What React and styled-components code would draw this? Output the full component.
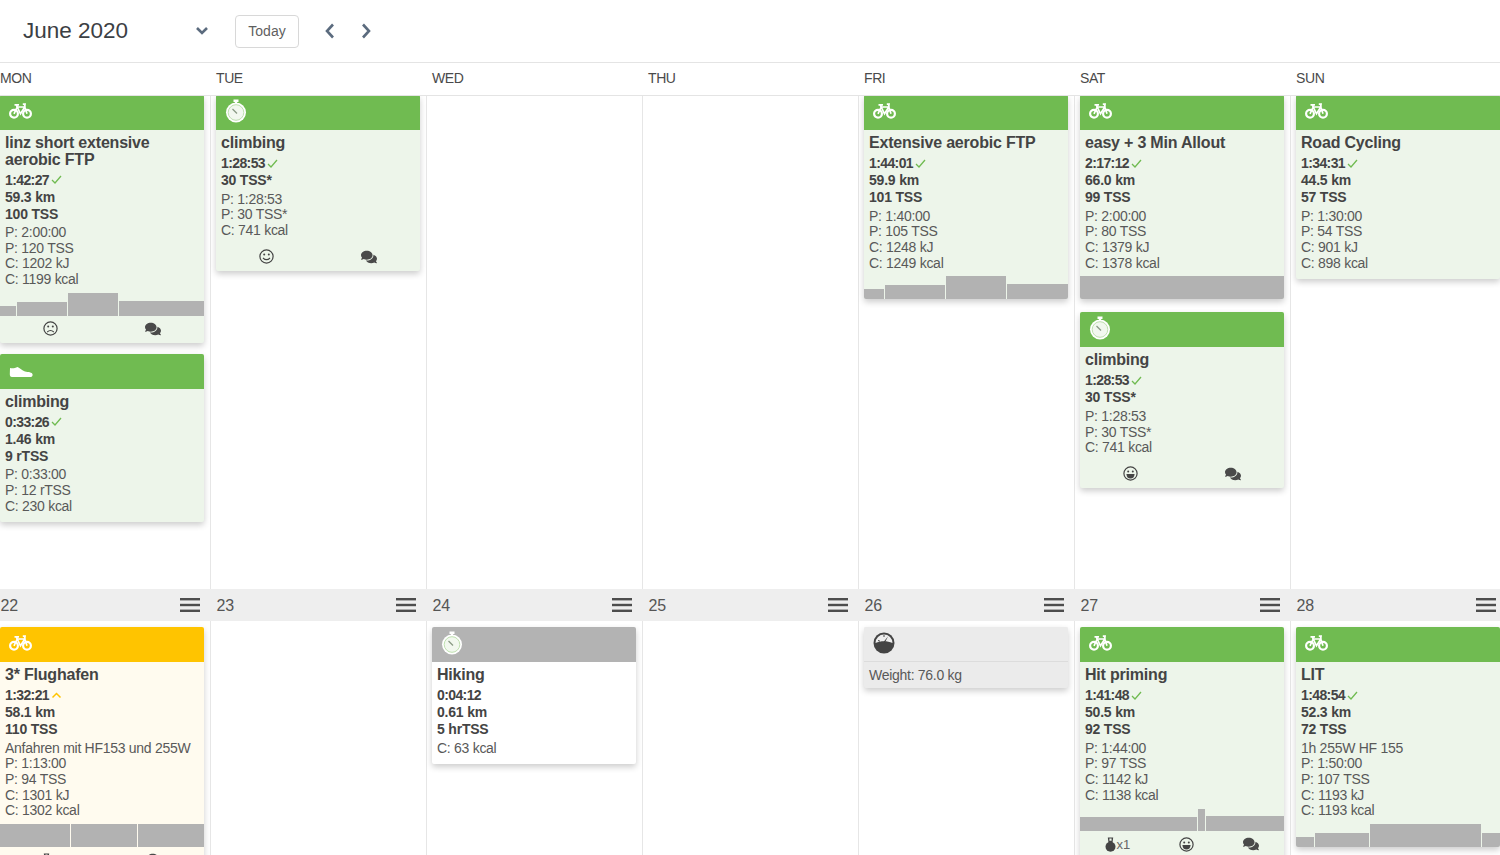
import React from 'react'
import styled, { createGlobalStyle } from 'styled-components'
import { FaComments } from 'react-icons/fa'

const GlobalStyle = createGlobalStyle`
  html, body {
    margin: 0;
    padding: 0;
    background: #fff;
    overflow: hidden;
  }
  * { box-sizing: border-box; }
`

const Page = styled.div`
  width: 1500px;
  height: 855px;
  overflow: hidden;
  font-family: "Liberation Sans", Arial, sans-serif;
  font-size: 14px;
  letter-spacing: -0.2px;
  color: #4a4a4a;
`

const Toolbar = styled.div`
  display: flex;
  align-items: center;
  height: 63px;
  padding: 0 0 0 23px;
  border-bottom: 1px solid #e4e4e4;
`

const MonthTitle = styled.div`
  width: 173px;
  font-size: 22.5px;
  letter-spacing: 0;
  color: #3c4044;
`

const NavIcon = styled.svg`
  display: block;
  fill: none;
  stroke: #5b6b7e;
  stroke-width: 2.6;
`

const MonthToggle = styled.div`
  width: 39px;
`

const TodayButton = styled.button`
  width: 64px;
  height: 33px;
  padding: 0;
  margin-right: 26px;
  background: #fff;
  border: 1px solid #d8d8d8;
  border-radius: 4px;
  font: inherit;
  color: #5f5f5f;
`

const Arrows = styled.div`
  display: flex;
  gap: 26px;
`

const WeekdayRow = styled.div`
  display: grid;
  grid-template-columns: repeat(7, 216px);
  height: 33px;
  margin-left: -5px;
  border-bottom: 1px solid #e4e4e4;
`

const Weekday = styled.div`
  padding-left: 5px;
  line-height: 31px;
  letter-spacing: -0.4px;
  color: #4a4a4a;
`

const WeekGrid = styled.div`
  display: grid;
  grid-template-columns: repeat(7, 216px);
  height: ${({ $height }) => $height}px;
  margin-left: -5px;
  overflow: hidden;
`

const DayCell = styled.div`
  padding: ${({ $top }) => $top}px 6px 0 5px;
  border-right: 1px solid #e6e6e6;
  & > :first-child {
    margin-top: ${({ $lift }) => $lift}px;
  }
`

const DateBar = styled.div`
  display: grid;
  grid-template-columns: repeat(7, 216px);
  height: 32px;
  margin-left: -5px;
  background: #eeeeee;
`

const DateHead = styled.div`
  display: flex;
  align-items: center;
  justify-content: space-between;
  padding: 0 11px 0 5.5px;
`

const DayNumber = styled.span`
  margin-top: 2px;
  font-size: 16px;
  letter-spacing: -0.2px;
  color: #555;
`

const MenuIcon = styled.svg`
  display: block;
  fill: #4d4d4d;
`

const palette = {
  green: { head: '#70bb51', body: '#edf5ea' },
  yellow: { head: '#ffc400', body: '#fffbef' },
  grey: { head: '#b3b3b3', body: '#ffffff' },
  metric: { head: '#ebebeb', body: '#ebebeb' },
}

const Card = styled.div`
  width: 204px;
  margin-bottom: ${({ $gap }) => $gap}px;
  background: ${({ $tone }) => palette[$tone].body};
  border-radius: 2px;
  box-shadow: 0 3px 6px rgba(0, 0, 0, 0.2);
  overflow: hidden;
`

const CardHead = styled.div`
  display: flex;
  align-items: center;
  height: 35px;
  padding: 0 0 3px 9px;
  background: ${({ $tone }) => palette[$tone].head};
  color: #fff;
  border-bottom: ${({ $tone }) => ($tone === 'metric' ? '1px solid #dcdcdc' : 'none')};
`

const CardBody = styled.div`
  padding: 5px 4px ${({ $bottom }) => $bottom}px 5px;
`

const Title = styled.div`
  font-size: 16px;
  font-weight: 700;
  line-height: 16.5px;
  color: #444;
`

const Stats = styled.div`
  margin-top: 3px;
`

const Stat = styled.div`
  display: flex;
  align-items: center;
  gap: 2px;
  height: 17px;
  font-weight: 700;
  letter-spacing: ${({ $tight }) => ($tight ? '-0.6px' : '-0.2px')};
  color: #444;
`

const Notes = styled.div`
  margin-top: ${({ $top }) => $top}px;
`

const Note = styled.div`
  line-height: 15.7px;
  letter-spacing: -0.28px;
  color: #595959;
`

const Chart = styled.div`
  display: flex;
  align-items: flex-end;
  gap: 1px;
  height: 24px;
  margin-top: 4px;
`

const Bar = styled.div`
  flex: ${({ $size }) => $size} 0 0;
  background: #b2b2b2;
`

const CardFooter = styled.div`
  display: flex;
  align-items: center;
  justify-content: space-around;
  height: 27px;
  padding-bottom: 1px;
  color: #4a4a4a;
`

const Badge = styled.div`
  display: flex;
  align-items: center;
  gap: 1px;
  font-size: 13px;
  color: #666;
`

const Bike = () => (
  <svg width="23" height="16" viewBox="0 0 23 16" fill="none" stroke="#fff">
    <circle cx="5" cy="10.8" r="3.9" strokeWidth="2.2" />
    <circle cx="18" cy="10.8" r="3.9" strokeWidth="2.2" />
    <path d="M5 10.8 L8.2 4 H15.8 L18 10.8 M8.2 4 L11.5 10.8 L15.8 4" strokeWidth="1.7" />
    <path d="M5.5 1.8 H10 M7.4 1.8 L8.2 4 M13.8 1.2 H16 L15.6 4" strokeWidth="1.8" />
  </svg>
)

const Stopwatch = () => (
  <svg width="22" height="24" viewBox="0 0 22 24">
    <rect x="8.5" y="0.5" width="5" height="2.5" fill="#fff" />
    <rect x="10" y="2" width="2" height="3" fill="#fff" />
    <circle cx="11" cy="13.5" r="10" fill="#fff" />
    <circle cx="11" cy="13.5" r="7.8" fill="#f2f8ef" stroke="#bfe0b0" strokeWidth="1" />
    <path d="M7.5 10 L12 14.5" stroke="#8a9a84" strokeWidth="1.2" />
  </svg>
)

const Shoe = () => (
  <svg width="24" height="18" viewBox="0 0 24 18">
    <path d="M1 7 C3 7.6 6 7.4 8.5 6 C11 7 13 9.4 16 10.4 C19 11 23.4 11 23.6 13.4 C23.7 15.2 22.6 16 21 16 L3 16 C1.4 16 0.8 15 0.8 13 Z" fill="#fff" />
  </svg>
)

const Gauge = () => (
  <svg width="22" height="22" viewBox="0 0 22 22">
    <circle cx="11" cy="11" r="10.5" fill="#444" />
    <path d="M2.5 11 A8.5 8.5 0 0 1 19.5 11 C14 8.5 8 8.5 2.5 11 Z" fill="#eee" />
    <path d="M15 4.5 L10.5 10 L11.8 10.8 Z" fill="#444" />
    <path d="M5 8.5 L7 9.2 M11 3 V5" stroke="#444" strokeWidth="1" />
  </svg>
)

const Face = ({ mood }) => (
  <svg width="15" height="15" viewBox="0 0 15 15">
    <circle cx="7.5" cy="7.5" r="6.6" fill="none" stroke="#444" strokeWidth="1.2" />
    <circle cx="5.2" cy="5.6" r="1" fill="#444" />
    <circle cx="9.8" cy="5.6" r="1" fill="#444" />
    {mood === 'smile' && <path d="M4 9 Q7.5 12.4 11 9" fill="none" stroke="#444" strokeWidth="1.1" />}
    {mood === 'frown' && <path d="M4.2 11 Q7.5 8 10.8 11" fill="none" stroke="#444" strokeWidth="1.1" />}
    {mood === 'grin' && <path d="M3.4 8 H11.6 Q11.2 12.6 7.5 12.6 Q3.8 12.6 3.4 8 Z" fill="#444" />}
  </svg>
)

const Medal = () => (
  <svg width="11" height="15" viewBox="0 0 11 15">
    <path d="M2.8 0.5 H8.2 L7.6 5 H3.4 Z M4.4 1.6 V3.8 H6.6 V1.6 Z" fill="#444" fillRule="evenodd" />
    <circle cx="5.5" cy="9.8" r="5" fill="#444" />
  </svg>
)

const Comments = () => <FaComments size={16} />

const Tick = () => (
  <svg width="11" height="9" viewBox="0 0 11 9">
    <path d="M1 5 L4 8 L10 1" fill="none" stroke="#70bb51" strokeWidth="1.3" />
  </svg>
)

const Caret = () => (
  <svg width="11" height="9" viewBox="0 0 11 9">
    <path d="M1.5 6.5 L5.5 2.5 L9.5 6.5" fill="none" stroke="#ffc400" strokeWidth="1.5" />
  </svg>
)

const Menu = () => (
  <MenuIcon width="20" height="14" viewBox="0 0 20 14">
    <rect y="0" width="20" height="2.4" />
    <rect y="5.8" width="20" height="2.4" />
    <rect y="11.6" width="20" height="2.4" />
  </MenuIcon>
)

const headIcons = { bike: Bike, watch: Stopwatch, shoe: Shoe, gauge: Gauge }

const bodyBottom = (w) => {
  if (w.bars) return 0
  if (w.tone === 'metric') return 5
  return w.foot ? 5 : 8
}

const Workout = ({ w }) => {
  const HeadIcon = headIcons[w.icon]
  return (
    <Card $tone={w.tone} $gap={w.gap || 11}>
      <CardHead $tone={w.tone}><HeadIcon /></CardHead>
      <CardBody $bottom={bodyBottom(w)}>
        {w.title && <Title>{w.title}</Title>}
        {w.stats && (
          <Stats>
            {w.stats.map((s, i) => (
              <Stat key={i} $tight={i === 0}>
                {s}
                {i === 0 && (w.tone === 'yellow' ? <Caret /> : w.tone === 'green' ? <Tick /> : null)}
              </Stat>
            ))}
          </Stats>
        )}
        <Notes $top={w.stats ? 3 : 0.5}>
          {w.notes.map((n, i) => <Note key={i}>{n}</Note>)}
        </Notes>
      </CardBody>
      {w.bars && (
        <Chart>
          {w.bars.map(([size, h], i) => <Bar key={i} $size={size} style={{ height: h }} />)}
        </Chart>
      )}
      {w.foot && (
        <CardFooter>
          {w.foot.map((f, i) => {
            if (f === 'comments') return <Comments key={i} />
            if (f === 'medal') return <Badge key={i}><Medal />x1</Badge>
            return <Face key={i} mood={f} />
          })}
        </CardFooter>
      )}
    </Card>
  )
}

const weekdays = ['MON', 'TUE', 'WED', 'THU', 'FRI', 'SAT', 'SUN']

const firstWeek = [
  [
    {
      tone: 'green', icon: 'bike', title: <>linz short extensive<br />aerobic FTP</>,
      stats: ['1:42:27', '59.3 km', '100 TSS'],
      notes: ['P: 2:00:00', 'P: 120 TSS', 'C: 1202 kJ', 'C: 1199 kcal'],
      bars: [[16, 10], [50, 14], [50, 23], [85, 15]], foot: ['frown', 'comments'],
    },
    {
      tone: 'green', icon: 'shoe', title: 'climbing',
      stats: ['0:33:26', '1.46 km', '9 rTSS'],
      notes: ['P: 0:33:00', 'P: 12 rTSS', 'C: 230 kcal'],
    },
  ],
  [
    {
      tone: 'green', icon: 'watch', title: 'climbing',
      stats: ['1:28:53', '30 TSS*'],
      notes: ['P: 1:28:53', 'P: 30 TSS*', 'C: 741 kcal'],
      foot: ['smile', 'comments'],
    },
  ],
  [],
  [],
  [
    {
      tone: 'green', icon: 'bike', title: 'Extensive aerobic FTP',
      stats: ['1:44:01', '59.9 km', '101 TSS'],
      notes: ['P: 1:40:00', 'P: 105 TSS', 'C: 1248 kJ', 'C: 1249 kcal'],
      bars: [[20, 10], [60, 14], [60, 23], [61, 15]],
    },
  ],
  [
    {
      tone: 'green', icon: 'bike', title: 'easy + 3 Min Allout', gap: 13,
      stats: ['2:17:12', '66.0 km', '99 TSS'],
      notes: ['P: 2:00:00', 'P: 80 TSS', 'C: 1379 kJ', 'C: 1378 kcal'],
      bars: [[204, 23]],
    },
    {
      tone: 'green', icon: 'watch', title: 'climbing',
      stats: ['1:28:53', '30 TSS*'],
      notes: ['P: 1:28:53', 'P: 30 TSS*', 'C: 741 kcal'],
      foot: ['grin', 'comments'],
    },
  ],
  [
    {
      tone: 'green', icon: 'bike', title: 'Road Cycling',
      stats: ['1:34:31', '44.5 km', '57 TSS'],
      notes: ['P: 1:30:00', 'P: 54 TSS', 'C: 901 kJ', 'C: 898 kcal'],
    },
  ],
]

const secondWeek = [
  {
    day: 22,
    items: [{
      tone: 'yellow', icon: 'bike', title: '3* Flughafen',
      stats: ['1:32:21', '58.1 km', '110 TSS'],
      notes: ['Anfahren mit HF153 und 255W', 'P: 1:13:00', 'P: 94 TSS', 'C: 1301 kJ', 'C: 1302 kcal'],
      bars: [[70, 23], [66, 23], [66, 23]], foot: ['medal', 'comments'],
    }],
  },
  { day: 23, items: [] },
  {
    day: 24,
    items: [{
      tone: 'grey', icon: 'watch', title: 'Hiking',
      stats: ['0:04:12', '0.61 km', '5 hrTSS'],
      notes: ['C: 63 kcal'],
    }],
  },
  { day: 25, items: [] },
  {
    day: 26,
    items: [{ tone: 'metric', icon: 'gauge', notes: ['Weight: 76.0 kg'] }],
  },
  {
    day: 27,
    items: [{
      tone: 'green', icon: 'bike', title: 'Hit priming',
      stats: ['1:41:48', '50.5 km', '92 TSS'],
      notes: ['P: 1:44:00', 'P: 97 TSS', 'C: 1142 kJ', 'C: 1138 kcal'],
      bars: [[117, 14], [7, 22], [78, 15]], foot: ['medal', 'grin', 'comments'],
    }],
  },
  {
    day: 28,
    items: [{
      tone: 'green', icon: 'bike', title: 'LIT',
      stats: ['1:48:54', '52.3 km', '72 TSS'],
      notes: ['1h 255W HF 155', 'P: 1:50:00', 'P: 107 TSS', 'C: 1193 kJ', 'C: 1193 kcal'],
      bars: [[18, 10], [54, 14], [112, 23], [18, 14]],
    }],
  },
]

const App = () => (
  <Page>
    <GlobalStyle />
    <Toolbar>
      <MonthTitle>June 2020</MonthTitle>
      <MonthToggle>
        <NavIcon width="12" height="8" viewBox="0 0 12 8"><path d="M1 1 L6 6 L11 1" /></NavIcon>
      </MonthToggle>
      <TodayButton>Today</TodayButton>
      <Arrows>
        <NavIcon width="10" height="16" viewBox="0 0 10 16"><path d="M8 1.5 L2 8 L8 14.5" /></NavIcon>
        <NavIcon width="10" height="16" viewBox="0 0 10 16"><path d="M2 1.5 L8 8 L2 14.5" /></NavIcon>
      </Arrows>
    </Toolbar>
    <WeekdayRow>
      {weekdays.map((d) => <Weekday key={d}>{d}</Weekday>)}
    </WeekdayRow>
    <WeekGrid $height={493}>
      {firstWeek.map((items, i) => (
        <DayCell key={i} $top={0} $lift={-1}>
          {items.map((w, j) => <Workout key={j} w={w} />)}
        </DayCell>
      ))}
    </WeekGrid>
    <DateBar>
      {secondWeek.map((d) => (
        <DateHead key={d.day}><DayNumber>{d.day}</DayNumber><Menu /></DateHead>
      ))}
    </DateBar>
    <WeekGrid $height={240}>
      {secondWeek.map((d) => (
        <DayCell key={d.day} $top={6} $lift={0}>
          {d.items.map((w, j) => <Workout key={j} w={w} />)}
        </DayCell>
      ))}
    </WeekGrid>
  </Page>
)

export default App
